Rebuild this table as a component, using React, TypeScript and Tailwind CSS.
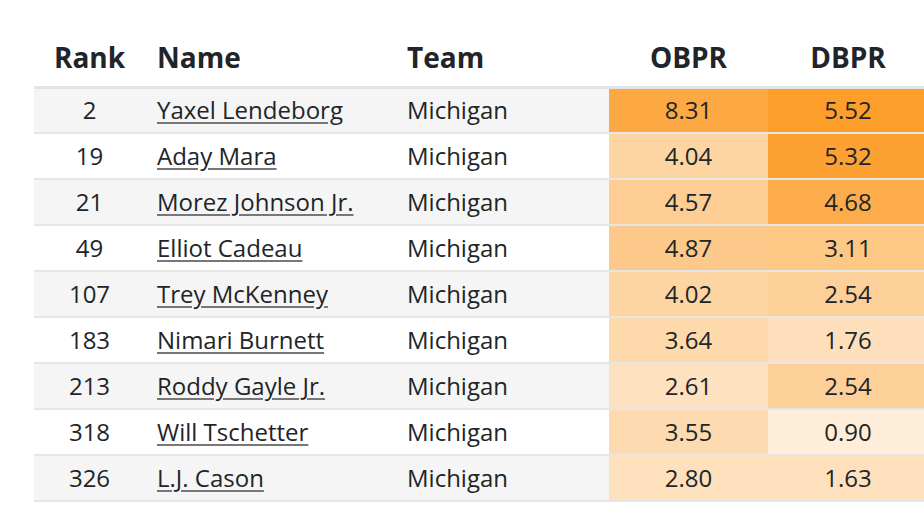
import React from "react";

type Row = { rank: number; name: string; o: string; oc: string; d: string; dc: string };

const rows: Row[] = [
  { rank: 2, name: "Yaxel Lendeborg", o: "8.31", oc: "#fda943", d: "5.52", dc: "#fd9e2a" },
  { rank: 19, name: "Aday Mara", o: "4.04", oc: "#fdd5a2", d: "5.32", dc: "#fda133" },
  { rank: 21, name: "Morez Johnson Jr.", o: "4.57", oc: "#fdcd93", d: "4.68", dc: "#fdac4c" },
  { rank: 49, name: "Elliot Cadeau", o: "4.87", oc: "#fdc98a", d: "3.11", dc: "#fdc784" },
  { rank: 107, name: "Trey McKenney", o: "4.02", oc: "#fdd5a3", d: "2.54", dc: "#fdd09a" },
  { rank: 183, name: "Nimari Burnett", o: "3.64", oc: "#fdd9ab", d: "1.76", dc: "#fedfbb" },
  { rank: 213, name: "Roddy Gayle Jr.", o: "2.61", oc: "#fee1bf", d: "2.54", dc: "#fdd09a" },
  { rank: 318, name: "Will Tschetter", o: "3.55", oc: "#fddaaf", d: "0.90", dc: "#feeed9" },
  { rank: 326, name: "L.J. Cason", o: "2.80", oc: "#fee0bc", d: "1.63", dc: "#fee0bd" },
];

export default function App() {
  return (
    <div
      className="w-[924px] h-[510px] overflow-hidden bg-white text-[#212529]"
      style={{ fontFamily: '"Open Sans", "Noto Sans", sans-serif' }}
    >
      <div className="pl-[34px] pt-[29px]">
        <table className="table-fixed border-collapse w-[894px]">
          <colgroup>
            <col className="w-[111px]" />
            <col className="w-[250px]" />
            <col className="w-[214px]" />
            <col className="w-[159px]" />
            <col className="w-[160px]" />
          </colgroup>
          <thead>
            <tr className="border-b-[3px] border-[#e3e3e3] h-[58px]">
              <th className="text-center text-[28px] leading-[40px] font-bold align-middle">Rank</th>
              <th className="text-left pl-[12px] text-[28px] leading-[40px] font-bold align-middle">Name</th>
              <th className="text-left pl-[12px] text-[28px] leading-[40px] font-bold align-middle">Team</th>
              <th className="text-center text-[28px] leading-[40px] font-bold align-middle">OBPR</th>
              <th className="text-center text-[28px] leading-[40px] font-bold align-middle">DBPR</th>
            </tr>
          </thead>
          <tbody>
            {rows.map((r, i) => (
              <tr
                key={r.rank}
                className={`h-[46px] border-b-2 border-[#e6e6e6] ${i % 2 === 0 ? "bg-[#f5f5f5]" : "bg-white"}`}
              >
                <td className="p-0 text-center text-[24px] leading-[32px] align-middle">{r.rank}</td>
                <td className="p-0 pl-[12px] text-[24px] leading-[32px] align-middle">
                  <a className="underline decoration-[#777777] decoration-2 underline-offset-[3px]">{r.name}</a>
                </td>
                <td className="p-0 pl-[12px] text-[24px] leading-[32px] align-middle">Michigan</td>
                <td className="p-0 text-center text-[24px] leading-[32px] align-middle" style={{ backgroundColor: r.oc }}>
                  {r.o}
                </td>
                <td className="p-0 text-center text-[24px] leading-[32px] align-middle" style={{ backgroundColor: r.dc }}>
                  {r.d}
                </td>
              </tr>
            ))}
          </tbody>
        </table>
      </div>
    </div>
  );
}
